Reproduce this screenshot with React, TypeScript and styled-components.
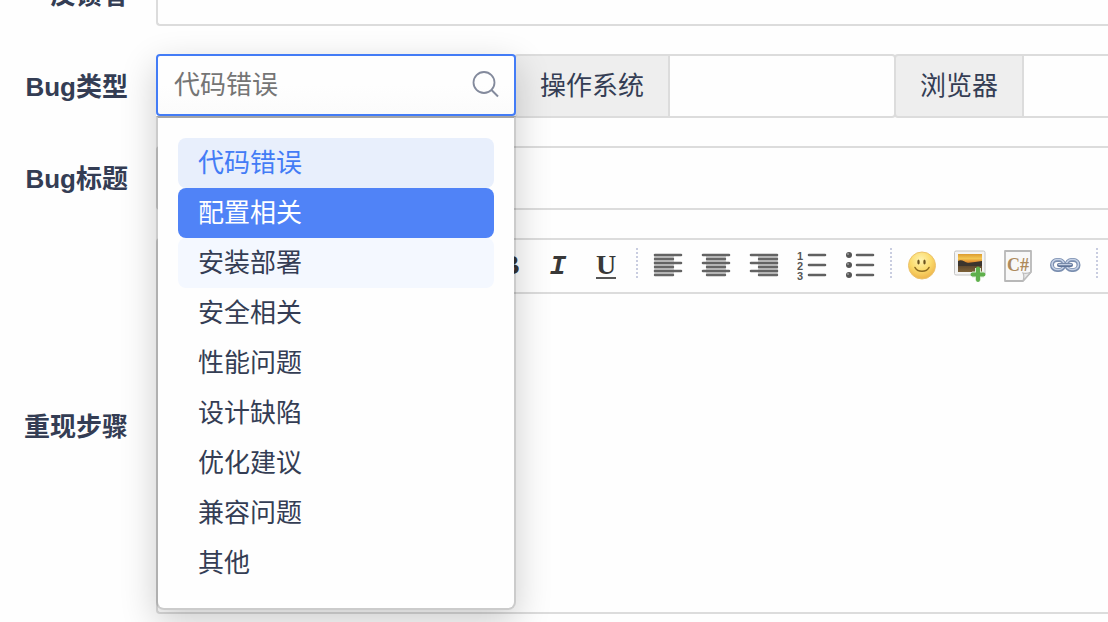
import React from "react";
import styled, { createGlobalStyle, css } from "styled-components";

const ink = "#343d54";
const line = "#dcdcdc";
const blue = "#437cf6";
const sans = `"Liberation Sans", "Noto Sans CJK SC", sans-serif`;

const GlobalStyle = createGlobalStyle`
  *, *::before, *::after { box-sizing: border-box; }
  body {
    margin: 0;
    background: #fefefe;
    color: ${ink};
    font-family: ${sans};
    font-size: 26px;
    line-height: 36px;
  }
  button, input, textarea { font: inherit; color: inherit; }
`;

const Page = styled.main`
  min-height: 100vh;
  overflow: hidden;
`;

/* The form is scrolled, so its first row is cut by the top of the page. */
const Form = styled.form`
  display: grid;
  grid-template-columns: 128px minmax(0, 1fr);
  column-gap: 28px;
  row-gap: 28px;
  align-items: center;
  margin-top: -38px;
`;

const Label = styled.label`
  padding-top: 1px;
  font-weight: 700;
  text-align: right;
  white-space: nowrap;
`;

const TextField = styled.input<{ $width?: number; $joined?: boolean }>`
  flex: ${(p) => (p.$width ? `0 0 ${p.$width}px` : "1 1 0")};
  width: 100%;
  min-width: 0;
  height: 64px;
  padding: 0 16px;
  border: 2px solid ${line};
  border-right-width: ${(p) => (p.$width ? 2 : 0)}px;
  border-radius: ${(p) => (p.$width ? "0 4px 4px 0" : p.$joined ? "0" : "4px 0 0 4px")};
  margin-left: ${(p) => (p.$joined ? -2 : 0)}px;
  background: #fefefe;
  outline: none;
`;

const Group = styled.div`
  display: flex;
  height: 64px;
`;

const AddOn = styled.label`
  flex: none;
  height: 64px;
  margin-left: -2px;
  padding: 12px 24px;
  border: 2px solid ${line};
  border-radius: 4px 0 0 4px;
  background: #eee;
  white-space: nowrap;
`;

const Picker = styled.div`
  position: relative;
  z-index: 1;
  flex: 0 0 360px;
  min-width: 0;
  height: 62px;
`;

const PickerBox = styled.div`
  position: relative;
  z-index: 1;
  display: flex;
  align-items: center;
  height: 62px;
  padding: 0 14px 0 16px;
  border: 2px solid ${blue};
  border-radius: 4px;
  background: linear-gradient(#fefefe 50%, #fbfbfb);
`;

const PickerInput = styled.input`
  flex: 1;
  min-width: 0;
  padding: 0;
  border: 0;
  background: transparent;
  outline: none;
  &::placeholder {
    color: #757575;
    opacity: 1;
  }
`;

/* The shadow belongs to the box and the open list together. */
const Menu = styled.ul`
  position: absolute;
  top: 100%;
  left: 0;
  right: 0;
  margin: 0;
  padding: 20px;
  list-style: none;
  border: 2px solid rgba(0, 0, 0, 0.2);
  border-top-color: rgba(0, 0, 0, 0.35);
  border-radius: 0 0 8px 8px;
  background: #fefefe;
  background-clip: padding-box;

  &::before {
    content: "";
    position: absolute;
    inset: -64px -2px -2px;
    border-radius: 4px 4px 8px 8px;
    box-shadow: 0 12px 36px rgba(0, 0, 0, 0.2);
    pointer-events: none;
  }
`;

type Tone = "plain" | "chosen" | "active" | "faint";

const tones: Record<Tone, ReturnType<typeof css>> = {
  plain: css``,
  chosen: css`
    background: #e8effc;
    color: ${blue};
  `,
  active: css`
    background: #5083f7;
    color: #fff;
  `,
  faint: css`
    background: #f4f8ff;
  `,
};

const Option = styled.li<{ $tone: Tone }>`
  height: 50px;
  padding: 7px 20px;
  border-radius: 8px;
  cursor: pointer;
  ${(p) => tones[p.$tone]}
`;

const Editor = styled.div`
  display: flex;
  flex-direction: column;
  height: 376px;
  border: 2px solid ${line};
  border-right: 0;
  border-radius: 4px 0 0 4px;
`;

const Toolbar = styled.div`
  display: flex;
  align-items: center;
  flex: none;
  height: 54px;
  padding-left: 328px;
  border-bottom: 2px solid ${line};
  overflow: hidden;
`;

const Tool = styled.button`
  display: flex;
  align-items: center;
  justify-content: center;
  flex: none;
  width: 48px;
  height: 48px;
  padding: 0;
  border: 0;
  background: transparent;
  color: #383838;
`;

const Letter = styled.span<{ $italic?: boolean; $underline?: boolean }>`
  padding-top: ${(p) => (p.$italic ? 3 : 0)}px;
  font-family: ${(p) => (p.$italic ? `"Liberation Mono", monospace` : `"Liberation Serif", serif`)};
  font-size: 28px;
  font-style: ${(p) => (p.$italic ? "italic" : "normal")};
  font-weight: 700;
  line-height: 24px;
  border-bottom: ${(p) => (p.$underline ? "2px solid #555" : "2px solid transparent")};
`;

const Separator = styled.span`
  flex: none;
  width: 2px;
  height: 32px;
  margin: 0 6px 4px;
  background: repeating-linear-gradient(#c9cde0 0 2px, transparent 2px 4px);
`;

const Content = styled.textarea`
  flex: 1;
  width: 100%;
  padding: 16px;
  border: 0;
  background: transparent;
  outline: none;
  resize: none;
`;

const Icon = ({ children }: { children: React.ReactNode }) => (
  <svg width="32" height="32" viewBox="0 0 32 32" fill="none" aria-hidden="true">
    {children}
  </svg>
);

const AlignIcon = ({ shift }: { shift: number }) => (
  <Icon>
    <rect x={2 + shift} y="5" width="20" height="20" fill="#d0d0d0" />
    <path d="M3 5H29M3 13H29M3 21H29" stroke="#636363" strokeWidth="2.6" strokeLinecap="round" />
    <path
      d={`M${3 + shift} 9h18M${3 + shift} 17h18M${3 + shift} 25h18`}
      stroke="#666"
      strokeWidth="2.4"
      strokeLinecap="round"
    />
  </Icon>
);

const ListLines = () => (
  <path d="M13 5H29M13 15H29M13 25H29" stroke="#606060" strokeWidth="2.6" strokeLinecap="round" />
);

const NumberListIcon = () => (
  <Icon>
    <g fill="#555" fontFamily="Liberation Sans" fontWeight="700" fontSize="11">
      <text x="1" y="10">1</text>
      <text x="1" y="20">2</text>
      <text x="1" y="30">3</text>
    </g>
    <ListLines />
  </Icon>
);

const BulletListIcon = () => (
  <Icon>
    {[5, 15, 25].map((y) => (
      <g key={y}>
        <circle cx="5" cy={y} r="3" fill="#555" />
        <circle cx="4" cy={y - 1} r="1" fill="#999" />
      </g>
    ))}
    <ListLines />
  </Icon>
);

const SmileIcon = () => (
  <Icon>
    <defs>
      <radialGradient id="face" cx="0.45" cy="0.3" r="0.7">
        <stop offset="0" stopColor="#fff3b0" />
        <stop offset="0.55" stopColor="#fbdb6c" />
        <stop offset="1" stopColor="#eeb44a" />
      </radialGradient>
    </defs>
    <circle cx="16" cy="15.5" r="13.5" fill="url(#face)" stroke="#ecc26a" />
    <ellipse cx="12.5" cy="12" rx="1.2" ry="2.5" fill="#6b5420" />
    <ellipse cx="18.5" cy="12" rx="1.2" ry="2.5" fill="#6b5420" />
    <path d="M9 17.500C11.500 22.500 20.500 22.500 23 17.500" stroke="#8c6a20" strokeWidth="1.6" strokeLinecap="round" />
  </Icon>
);

const ImageIcon = () => (
  <Icon>
    <defs>
      <linearGradient id="dusk" x1="0" y1="0" x2="0" y2="1">
        <stop offset="0" stopColor="#dc9c30" />
        <stop offset="0.25" stopColor="#f3c653" />
        <stop offset="0.45" stopColor="#e08a2c" />
        <stop offset="0.55" stopColor="#54402c" />
        <stop offset="1" stopColor="#7d6238" />
      </linearGradient>
    </defs>
    <rect x="0.500" y="1" width="30.500" height="24" rx="1.500" fill="#f4f4f4" stroke="#c4c4c4" />
    <rect x="4" y="4" width="24" height="18" fill="url(#dusk)" />
    <path d="M4 11C8 9 10 12 14 13L28 11V16H4Z" fill="#3c352e" />
    <path d="M24 18V30.500M18 24.500H30" stroke="#d8ecd0" strokeWidth="6" />
    <path d="M24 18.500V30M18.500 24.500H29.500" stroke="#5fb04c" strokeWidth="4" strokeLinecap="round" />
  </Icon>
);

const CodeIcon = () => (
  <Icon>
    <path d="M3 1H29V22L21 31H3Z" fill="#f8f8f8" stroke="#b8b8b8" strokeWidth="1.8" strokeLinejoin="round" />
    <path d="M29 22L21 31C22 28 22 25 21 23C24 24 27 23 29 22Z" fill="#e8e8e8" stroke="#bcbcbc" strokeWidth="1.2" />
    <text x="5" y="21" fill="#ad8a5c" fontFamily="Liberation Serif" fontWeight="700" fontSize="18">
      C#
    </text>
  </Icon>
);

const LinkIcon = () => (
  <Icon>
    <g strokeWidth="4" stroke="#7b8fb0">
      <rect x="2" y="10" width="12" height="10" rx="5" />
      <rect x="16.500" y="10" width="12" height="10" rx="5" />
    </g>
    <g strokeWidth="1.600" stroke="#c6d2e6">
      <rect x="2" y="9.500" width="12" height="10" rx="5" />
      <rect x="16.500" y="9.500" width="12" height="10" rx="5" />
    </g>
    <path d="M9 15H21" stroke="#5f7499" strokeWidth="4" strokeLinecap="round" />
    <path d="M9 14.500H21" stroke="#c2cee2" strokeWidth="1.600" strokeLinecap="round" />
  </Icon>
);

const SearchIcon = () => (
  <Icon>
    <circle cx="16" cy="13.500" r="10.500" stroke="#838a9c" strokeWidth="1.800" />
    <path d="M23.500 21L30 27.500" stroke="#838a9c" strokeWidth="2" />
  </Icon>
);

const bugTypes: { name: string; tone: Tone }[] = [
  { name: "代码错误", tone: "chosen" },
  { name: "配置相关", tone: "active" },
  { name: "安装部署", tone: "faint" },
  { name: "安全相关", tone: "plain" },
  { name: "性能问题", tone: "plain" },
  { name: "设计缺陷", tone: "plain" },
  { name: "优化建议", tone: "plain" },
  { name: "兼容问题", tone: "plain" },
  { name: "其他", tone: "plain" },
];

const toolGroups: { label: string; icon: React.ReactNode }[][] = [
  [
    { label: "粗体", icon: <Letter>B</Letter> },
    { label: "斜体", icon: <Letter $italic>I</Letter> },
    { label: "下划线", icon: <Letter $underline>U</Letter> },
  ],
  [
    { label: "左对齐", icon: <AlignIcon shift={0} /> },
    { label: "居中", icon: <AlignIcon shift={4} /> },
    { label: "右对齐", icon: <AlignIcon shift={8} /> },
    { label: "编号", icon: <NumberListIcon /> },
    { label: "项目符号", icon: <BulletListIcon /> },
  ],
  [
    { label: "表情", icon: <SmileIcon /> },
    { label: "图片", icon: <ImageIcon /> },
    { label: "代码", icon: <CodeIcon /> },
    { label: "超级链接", icon: <LinkIcon /> },
  ],
];

export default function App() {
  return (
    <>
      <GlobalStyle />
      <Page>
        <Form>
          <Label htmlFor="reporter">反馈者</Label>
          <TextField id="reporter" />

          <Label htmlFor="type">Bug类型</Label>
          <Group>
            <Picker>
              <PickerBox>
                <PickerInput
                  id="type"
                  role="combobox"
                  aria-expanded="true"
                  aria-controls="type-list"
                  placeholder="代码错误"
                />
                <SearchIcon />
              </PickerBox>
              <Menu id="type-list" role="listbox">
                {bugTypes.map((t) => (
                  <Option key={t.name} role="option" aria-selected={t.tone === "chosen"} $tone={t.tone}>
                    {t.name}
                  </Option>
                ))}
              </Menu>
            </Picker>
            <AddOn htmlFor="os">操作系统</AddOn>
            <TextField id="os" $width={228} $joined />
            <AddOn htmlFor="browser">浏览器</AddOn>
            <TextField id="browser" $joined />
          </Group>

          <Label htmlFor="title">Bug标题</Label>
          <TextField id="title" />

          <Label htmlFor="steps">重现步骤</Label>
          <Editor>
            <Toolbar role="toolbar">
              {toolGroups.map((group, i) => (
                <React.Fragment key={i}>
                  {group.map((tool) => (
                    <Tool key={tool.label} type="button" aria-label={tool.label}>
                      {tool.icon}
                    </Tool>
                  ))}
                  <Separator />
                </React.Fragment>
              ))}
            </Toolbar>
            <Content id="steps" />
          </Editor>
        </Form>
      </Page>
    </>
  );
}
